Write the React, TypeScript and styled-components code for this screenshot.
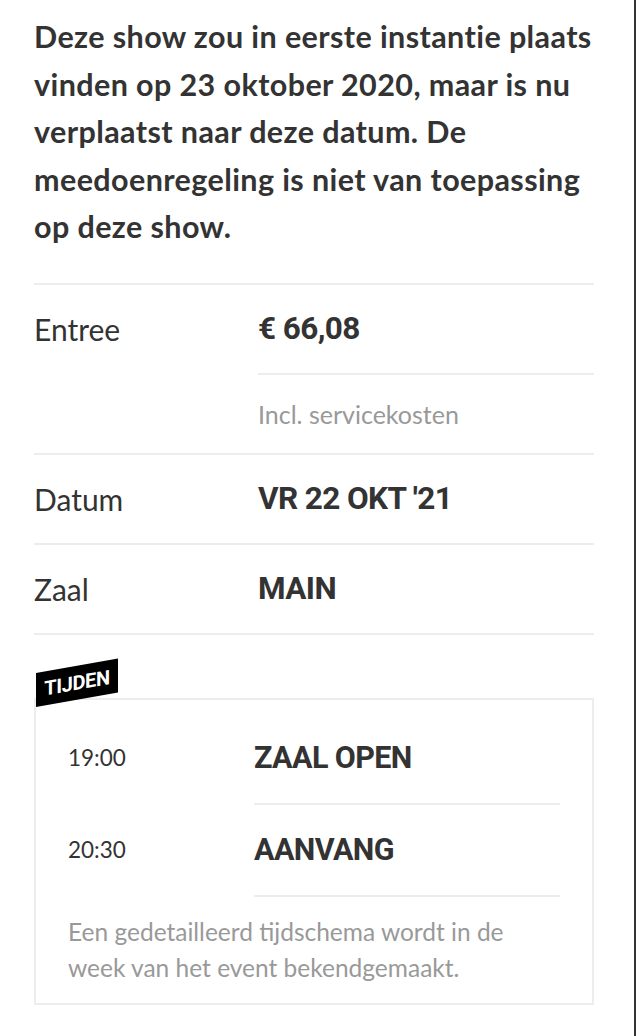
import React from 'react'
import styled, { createGlobalStyle } from 'styled-components'

const GlobalStyle = createGlobalStyle`
  html, body {
    margin: 0;
    padding: 0;
    background: #fff;
  }
  body {
    font-family: Lato, "Open Sans", sans-serif;
    color: #333;
  }
`

const Page = styled.div`
  box-sizing: border-box;
  width: 636px;
  min-height: 1036px;
  padding: 13px 40px 31px 34px;
  border-right: 2px solid #333;
`

const Intro = styled.p`
  margin: 0 0 32px;
  font-size: 30.5px;
  line-height: 47.5px;
  font-weight: 700;
  letter-spacing: 0.4px;
  color: #333;
`

const InfoTable = styled.div`
  border-top: 2px solid #ededed;
`

const InfoRow = styled.div`
  display: flex;
  border-bottom: 2px solid #ededed;
`

const Label = styled.div`
  flex: 0 0 224px;
  padding: 24px 0;
  font-size: 30px;
  line-height: 40px;
  color: #333;
`

const ValueCell = styled.div`
  flex: 1;
  display: flex;
  flex-direction: column;
`

const Value = styled.div<{ $divided?: boolean }>`
  padding: 24px 0;
  font-family: Roboto, sans-serif;
  font-weight: 700;
  font-size: 31.5px;
  line-height: 40px;
  letter-spacing: -0.6px;
  color: #333;
  border-bottom: ${p => (p.$divided ? '2px solid #ededed' : 'none')};
`

const Note = styled.div`
  padding: 19px 0;
  font-size: 25px;
  line-height: 40px;
  color: #999;
`

const Schedule = styled.div`
  position: relative;
  margin-top: 63px;
  border: 2px solid #ededed;
  padding: 13px 32px 17px 32px;
`

const Badge = styled.div`
  position: absolute;
  left: 0;
  top: -27px;
  width: 82px;
  height: 34px;
  background: #000;
  color: #fff;
  font-family: Roboto, sans-serif;
  font-weight: 700;
  font-size: 20px;
  line-height: 34px;
  text-align: center;
  letter-spacing: -0.4px;
  transform: skewY(-10deg);
  transform-origin: 0 100%;
`

const TimeRow = styled.div`
  display: flex;
`

const Time = styled.div`
  flex: 0 0 186px;
  padding: 25px 0;
  font-size: 22.5px;
  line-height: 40px;
  color: #333;
`

const Moment = styled.div`
  flex: 1;
  padding: 25px 0;
  border-bottom: 2px solid #ededed;
  font-family: Roboto, sans-serif;
  font-weight: 700;
  font-size: 30.5px;
  line-height: 40px;
  letter-spacing: -0.6px;
  color: #333;
`

const Footnote = styled.p`
  margin: 17px 0 0;
  font-size: 24.5px;
  line-height: 36px;
  color: #999;
`

export default function App() {
  return (
    <>
      <GlobalStyle />
      <Page>
        <Intro>
          Deze show zou in eerste instantie plaats vinden op 23 oktober 2020, maar is nu verplaatst
          naar deze datum. De meedoenregeling is niet van toepassing op deze show.
        </Intro>
        <InfoTable>
          <InfoRow>
            <Label>Entree</Label>
            <ValueCell>
              <Value $divided>€ 66,08</Value>
              <Note>Incl. servicekosten</Note>
            </ValueCell>
          </InfoRow>
          <InfoRow>
            <Label>Datum</Label>
            <ValueCell>
              <Value>VR 22 OKT '21</Value>
            </ValueCell>
          </InfoRow>
          <InfoRow>
            <Label>Zaal</Label>
            <ValueCell>
              <Value>MAIN</Value>
            </ValueCell>
          </InfoRow>
        </InfoTable>
        <Schedule>
          <Badge>TIJDEN</Badge>
          <TimeRow>
            <Time>19:00</Time>
            <Moment>ZAAL OPEN</Moment>
          </TimeRow>
          <TimeRow>
            <Time>20:30</Time>
            <Moment>AANVANG</Moment>
          </TimeRow>
          <Footnote>
            Een gedetailleerd tijdschema wordt in de week van het event bekendgemaakt.
          </Footnote>
        </Schedule>
      </Page>
    </>
  )
}
